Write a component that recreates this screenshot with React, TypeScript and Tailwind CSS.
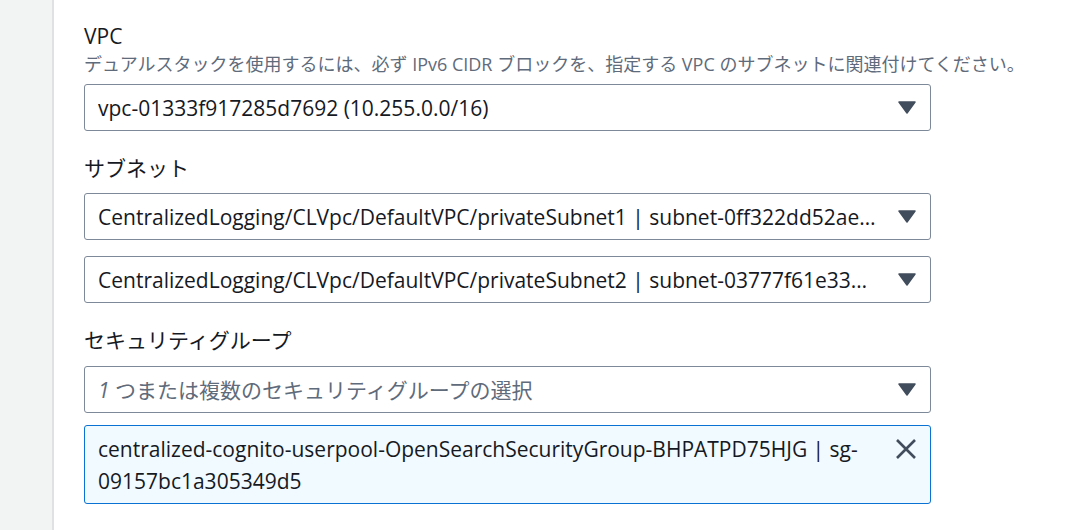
import React from "react";

const font = { fontFamily: '"Open Sans", "Noto Sans CJK JP", sans-serif' };

function Caret() {
  return (
    <svg width="18" height="13" viewBox="0 0 18 13" className="shrink-0">
      <path d="M1 1 L17 1 L9 12 Z" fill="#414d5c" stroke="#414d5c" strokeWidth="1.5" strokeLinejoin="round" />
    </svg>
  );
}

function Select({ children, placeholder }: { children: React.ReactNode; placeholder?: boolean }) {
  return (
    <div className="flex h-[47px] w-[847px] items-center rounded-[3px] border-[1.5px] border-[#7d8998] bg-white pl-[13px] pr-[14px]">
      <div
        className={
          "min-w-0 flex-1 truncate pr-[20px] text-[21px] leading-[30px] " +
          (placeholder ? "text-[#5f6b7a]" : "text-[#16191f]")
        }
      >
        {children}
      </div>
      <Caret />
    </div>
  );
}

function Label({ children }: { children: React.ReactNode }) {
  return <div className="text-[21px] leading-[30px] text-[#16191f]">{children}</div>;
}

export default function App() {
  return (
    <div className="flex h-[530px] w-[1069px] overflow-hidden bg-white" style={font}>
      <div className="w-[54px] shrink-0 border-r-2 border-[#dfe1e2] bg-[#f2f3f3]" />
      <div className="flex flex-col pl-[30px] pt-[21px]">
        <Label>VPC</Label>
        <div className="whitespace-nowrap text-[18px] leading-[27px] text-[#5f6b7a]">
          デュアルスタックを使用するには、必ず IPv6 CIDR ブロックを、指定する VPC のサブネットに関連付けてください。
        </div>
        <div className="mt-[6px]">
          <Select>vpc-01333f917285d7692 (10.255.0.0/16)</Select>
        </div>

        <div className="mt-[22px]">
          <Label>サブネット</Label>
        </div>
        <div className="mt-[10px] flex flex-col gap-[16px]">
          <Select>CentralizedLogging/CLVpc/DefaultVPC/privateSubnet1 | subnet-0ff322dd52ae0c7a1</Select>
          <Select>CentralizedLogging/CLVpc/DefaultVPC/privateSubnet2 | subnet-03777f61e33a5b9d8</Select>
        </div>

        <div className="mt-[22px]">
          <Label>セキュリティグループ</Label>
        </div>
        <div className="mt-[11px]">
          <Select placeholder>
            <span className="italic">1</span> つまたは複数のセキュリティグループの選択
          </Select>
        </div>
        <div className="mt-[12px] flex w-[847px] items-start rounded-[3px] border-[1.5px] border-[#0972d3] bg-[#f1faff] pb-[6px] pl-[13px] pr-[13px] pt-[7px]">
          <div className="min-w-0 flex-1 pr-[30px] text-[21px] leading-[32px] text-[#16191f]">
            centralized-cognito-userpool-OpenSearchSecurityGroup-BHPATPD75HJG | sg-09157bc1a305349d5
          </div>
          <svg width="22" height="22" viewBox="0 0 22 22" className="mt-[5px] shrink-0">
            <path d="M2 2 L20 20 M20 2 L2 20" stroke="#414d5c" strokeWidth="2.6" strokeLinecap="butt" />
          </svg>
        </div>
      </div>
    </div>
  );
}
